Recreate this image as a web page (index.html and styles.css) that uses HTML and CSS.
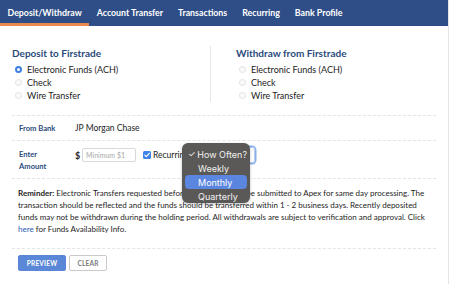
FILE: index.html
```html
<!DOCTYPE html>
<html lang="en">
<head>
<meta charset="utf-8">
<title>Deposit / Withdraw</title>
<link rel="stylesheet" href="styles.css">
</head>
<body>
<div class="page">
  <nav class="tabs">
    <a class="tab active">Deposit/Withdraw</a>
    <a class="tab">Account Transfer</a>
    <a class="tab">Transactions</a>
    <a class="tab">Recurring</a>
    <a class="tab">Bank Profile</a>
  </nav>
  <div class="content">
    <div class="methods">
      <div class="col col-left">
        <h2 class="col-title">Deposit to Firstrade</h2>
        <label class="opt"><span class="radio on"></span>Electronic Funds (ACH)</label>
        <label class="opt"><span class="radio"></span>Check</label>
        <label class="opt"><span class="radio"></span>Wire Transfer</label>
      </div>
      <div class="col col-right">
        <h2 class="col-title">Withdraw from Firstrade</h2>
        <label class="opt"><span class="radio"></span>Electronic Funds (ACH)</label>
        <label class="opt"><span class="radio"></span>Check</label>
        <label class="opt"><span class="radio"></span>Wire Transfer</label>
      </div>
    </div>
    <div class="row row-bank">
      <div class="lbl">From Bank</div>
      <div class="val">JP Morgan Chase</div>
    </div>
    <div class="row row-amount">
      <div class="lbl">Enter<br>Amount</div>
      <div class="val amount">
        <span class="dollar">$</span>
        <span class="input">Minimum $1</span>
        <span class="check"><svg viewBox="0 0 8 8" width="8" height="8"><path d="M1.8 4.2 L3.3 5.7 L6.3 2.3" fill="none" stroke="#fff" stroke-width="1.2" stroke-linecap="round" stroke-linejoin="round"/></svg></span>
        <span class="rec">Recurring</span>
        <span class="select"></span>
      </div>
    </div>
    <p class="reminder"><b>Reminder:</b> Electronic Transfers requested before 4:00 PM ET will be submitted to Apex for same day processing. The transaction should be reflected and the funds should be transferred within 1 - 2 business days. Recently deposited funds may not be withdrawn during the holding period. All withdrawals are subject to verification and approval. Click <a class="link">here</a> for Funds Availability Info.</p>
    <div class="actions">
      <button class="btn btn-primary">PREVIEW</button>
      <button class="btn btn-ghost">CLEAR</button>
    </div>
  </div>
  <ul class="menu">
    <li class="item"><span class="mark">✓</span>How Often?</li>
    <li class="item"><span class="mark"></span>Weekly</li>
    <li class="item hl"><span class="mark"></span>Monthly</li>
    <li class="item"><span class="mark"></span>Quarterly</li>
  </ul>
</div>
</body>
</html>
```

FILE: styles.css
```css
* { box-sizing: border-box; }
html, body { margin: 0; padding: 0; background: #fff; }
body { font-family: Lato, "Liberation Sans", sans-serif; color: #222; }

.page {
  position: relative;
  width: 449px;
  height: 284px;
  border-right: 1px solid #e4e4e4;
  overflow: hidden;
}

.tabs {
  display: flex;
  height: 26px;
  background: #2f4e87;
}
.tab {
  display: flex;
  align-items: center;
  padding: 1px 7.5px 0;
  color: #fff;
  font-weight: 700;
  font-size: 8.8px;
  border-bottom: 3px solid transparent;
}
.tab.active { border-bottom-color: #e88a4f; }

.content { padding: 0 12px; }

.methods {
  display: grid;
  grid-template-columns: 199px 1fr;
  padding-top: 20px;
  margin-bottom: 13px;
}
.col { display: flex; flex-direction: column; }
.col-left { border-right: 1px solid #e6e6e6; }
.col-right { padding-left: 25px; }
.col-title {
  margin: 0 0 3px;
  font-size: 10px;
  line-height: 14px;
  font-weight: 700;
  color: #2b4a7c;
}
.opt {
  display: flex;
  align-items: center;
  height: 13px;
  font-size: 9px;
  color: #222;
}
.radio {
  width: 7px;
  height: 7px;
  border-radius: 50%;
  border: 1px solid #e2e2e2;
  background: #fafafa;
  margin: 0 5px 0 3px;
}
.radio.on {
  border: 2px solid #3d7fe6;
  background: #fff;
}

.row {
  display: grid;
  grid-template-columns: 56px 1fr;
  padding-left: 7px;
  border-top: 1px dashed #e4e4e4;
}
.row-bank { height: 25px; align-items: center; }
.row-amount { height: 38px; align-items: start; padding-top: 7px; }
.lbl {
  font-size: 7.6px;
  font-weight: 700;
  color: #2b4a7c;
  line-height: 12px;
}
.val { font-size: 8.5px; }

.amount { display: flex; align-items: center; height: 14px; }
.dollar { font-weight: 700; font-size: 9px; width: 7px; }
.input {
  width: 54px;
  height: 14px;
  border: 1px solid #d6dade;
  border-radius: 2px;
  font-size: 7px;
  color: #a9a9a9;
  display: flex;
  align-items: center;
  padding-left: 3px;
}
.check {
  width: 8px;
  height: 8px;
  margin-left: 7px;
  border-radius: 1.5px;
  background: #3f82e8;
  display: flex;
}
.rec { margin-left: 2px; font-size: 8.5px; }
.select {
  width: 63px;
  height: 16px;
  margin-left: 3px;
  border: 1px solid #b9c9e6;
  border-radius: 3px;
  box-shadow: 0 0 0 1.5px #8ab0ef;
}

.reminder {
  margin: 0;
  padding: 8px 6px 13px;
  border-top: 1px dashed #e4e4e4;
  border-bottom: 1px dashed #e4e4e4;
  font-size: 8px;
  line-height: 12px;
  color: #1e1e1e;
}
.reminder b { font-weight: 700; }
.link { color: #2a5cb3; }

.actions { display: flex; gap: 3px; padding: 6px 6px 0; }
.btn {
  height: 16px;
  border-radius: 2px;
  font-family: Lato, "Liberation Sans", sans-serif;
  font-size: 6.5px;
  font-weight: 700;
  letter-spacing: 0.2px;
  padding: 0;
  cursor: pointer;
}
.btn-primary { width: 48px; background: #5b87d8; border: 1px solid #5b87d8; color: #fff; }
.btn-ghost { width: 38px; background: #fff; border: 1px solid #c9c9c9; color: #7a7a7a; }

.menu {
  position: absolute;
  left: 182px;
  top: 143px;
  width: 68px;
  height: 60px;
  margin: 0;
  padding: 4px 3px 0;
  list-style: none;
  background: #5b5957;
  border-radius: 6px;
  box-shadow: 0 1px 3px rgba(0,0,0,0.25);
  font-family: Inter, "Noto Sans", sans-serif;
  font-size: 9px;
  color: #f2f2f2;
}
.item {
  display: flex;
  align-items: center;
  height: 14px;
  border-radius: 4px;
  white-space: nowrap;
}
.item.hl { background: #5a86e0; color: #fff; }
.mark { width: 13px; padding-left: 3px; font-size: 8.5px; }
```
